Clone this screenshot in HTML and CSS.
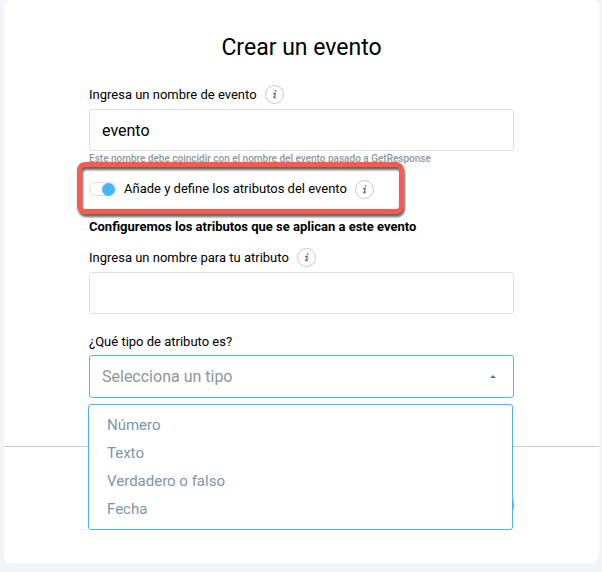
FILE: index.html
```html
<!DOCTYPE html>
<html lang="es">
<head>
    <meta charset="UTF-8">
    <meta name="viewport" content="width=device-width, initial-scale=1.0">
    <title>Crear un evento</title>
    <link rel="stylesheet" href="styles.css">
</head>
<body>

    <form class="card">
        <div class="card-body">
            <h1>Crear un evento</h1>

            <!-- Event name -->
            <div class="label-row">
                <label for="event-name">Ingresa un nombre de evento</label>
                <button type="button" class="info-btn" aria-label="Información">
                    <svg viewBox="0 0 19 19"><circle cx="9.5" cy="9.5" r="9"/><path d="M9.8 6h1.6M8 8.6h2.2L9.3 12.4h1.5M8 12.4h1.6"/></svg>
                </button>
            </div>
            <input type="text" class="text-input" id="event-name" value="evento">
            <p class="hint">Este nombre debe coincidir con el nombre del evento pasado a GetResponse</p>

            <!-- Attributes switch -->
            <div class="toggle-row">
                <input type="checkbox" class="switch" id="attributes" checked>
                <label for="attributes">Añade y define los atributos del evento</label>
                <button type="button" class="info-btn" aria-label="Información">
                    <svg viewBox="0 0 19 19"><circle cx="9.5" cy="9.5" r="9"/><path d="M9.8 6h1.6M8 8.6h2.2L9.3 12.4h1.5M8 12.4h1.6"/></svg>
                </button>
            </div>

            <h2>Configuremos los atributos que se aplican a este evento</h2>

            <!-- Attribute name -->
            <div class="label-row">
                <label for="attribute-name">Ingresa un nombre para tu atributo</label>
                <button type="button" class="info-btn" aria-label="Información">
                    <svg viewBox="0 0 19 19"><circle cx="9.5" cy="9.5" r="9"/><path d="M9.8 6h1.6M8 8.6h2.2L9.3 12.4h1.5M8 12.4h1.6"/></svg>
                </button>
            </div>
            <input type="text" class="text-input" id="attribute-name">

            <!-- Attribute type -->
            <div class="label-row type-label">
                <label for="attribute-type">¿Qué tipo de atributo es?</label>
            </div>
            <div class="select-box">
                <select id="attribute-type">
                    <option>Selecciona un tipo</option>
                </select>
                <svg class="arrow" viewBox="0 0 6 3"><path d="M0 3L3 0L6 3z"/></svg>
                <ul class="menu">
                    <li><button type="button">Número</button></li>
                    <li><button type="button">Texto</button></li>
                    <li><button type="button">Verdadero o falso</button></li>
                    <li><button type="button">Fecha</button></li>
                </ul>
            </div>
        </div>

        <div class="card-footer">
            <button type="submit" class="submit-btn" aria-label="Crear"></button>
        </div>
    </form>

</body>
</html>
```
FILE: styles.css
```css
* {
    margin: 0;
    padding: 0;
    box-sizing: border-box;
}

body {
    font-family: Roboto, "Liberation Sans", sans-serif;
    font-size: 13px;
    line-height: 20px;
    color: #000;
    background-color: #f3f4f8;
    padding: 0 3px 9px 4px;
}

button,
input,
select {
    font: inherit;
}

.card {
    background-color: #fff;
    border-radius: 8px;
}

.card-body {
    padding: 34px 85px 48px;
    border-bottom: 1px solid #c9c9c9;
}

h1 {
    font-size: 23px;
    line-height: 28px;
    font-weight: 400;
    text-align: center;
    margin-bottom: 23px;
}

h2 {
    font-size: 13px;
    line-height: 16px;
    font-weight: 700;
    margin: 20px 0 13px;
}

/* Labels and info icons */
.label-row {
    display: flex;
    gap: 8px;
    margin-bottom: 4px;
}

.type-label {
    margin: 18px 0 3px;
}

.info-btn {
    width: 19px;
    height: 19px;
    border: none;
    background: none;
    cursor: pointer;
}

.info-btn svg {
    display: block;
    fill: none;
}

.info-btn circle {
    stroke: #c6c9cc;
}

.info-btn path {
    stroke: #5f7f99;
    stroke-width: 1.5;
}

/* Text boxes */
.text-input {
    display: block;
    width: 100%;
    height: 42px;
    padding: 0 12px;
    font-size: 16px;
    background-color: #fff;
    border: 1px solid #dedfe0;
    border-radius: 3px;
}

.hint {
    font-size: 10px;
    line-height: 16px;
    font-weight: 500;
    color: #8e979f;
}

/* Switch row with its highlight frame */
.toggle-row {
    display: flex;
    align-items: center;
    gap: 8px;
    position: relative;
    width: fit-content;
    margin-top: 12px;
}

.toggle-row::after {
    content: "";
    position: absolute;
    inset: -17px -30px -15px -12px;
    border: 5px solid #fd5a4c;
    border-radius: 8px;
    filter: drop-shadow(1px 3px 1px rgba(0, 0, 0, 0.6));
    pointer-events: none;
}

.switch {
    appearance: none;
    width: 27px;
    height: 14px;
    border: 1px solid #dedfe0;
    border-radius: 7px;
    background-color: #fff;
    cursor: pointer;
}

.switch::before {
    content: "";
    display: block;
    width: 13px;
    height: 13px;
    border-radius: 50%;
    background-color: #c6c9cc;
}

.switch:checked::before {
    margin-left: auto;
    background-color: #43b6fd;
}

/* Drop-down */
.select-box {
    position: relative;
}

.select-box select {
    appearance: none;
    display: block;
    width: 100%;
    height: 43px;
    padding: 0 12px;
    font-size: 16px;
    color: #8e959b;
    background-color: #fff;
    border: 1px solid #43b6fd;
    border-radius: 3px;
}

.arrow {
    position: absolute;
    top: 20px;
    right: 18px;
    width: 6px;
    height: 3px;
    fill: #5f7383;
}

.menu {
    position: absolute;
    top: 49px;
    left: -1px;
    width: 100%;
    padding: 6px 0;
    list-style: none;
    background-color: #fff;
    border: 1px solid #43b6fd;
    border-radius: 3px;
}

.menu button {
    display: block;
    width: 100%;
    padding: 4px 18px;
    font-size: 15px;
    text-align: left;
    color: #7d95a8;
    background: none;
    border: none;
    cursor: pointer;
}

.menu button:hover {
    background-color: #f3f4f8;
}

.card-footer {
    display: flex;
    justify-content: flex-end;
    padding: 38px 85px;
}

.submit-btn {
    width: 120px;
    height: 40px;
    border: none;
    border-radius: 20px;
    background-color: #43b6fd;
    cursor: pointer;
}
```
